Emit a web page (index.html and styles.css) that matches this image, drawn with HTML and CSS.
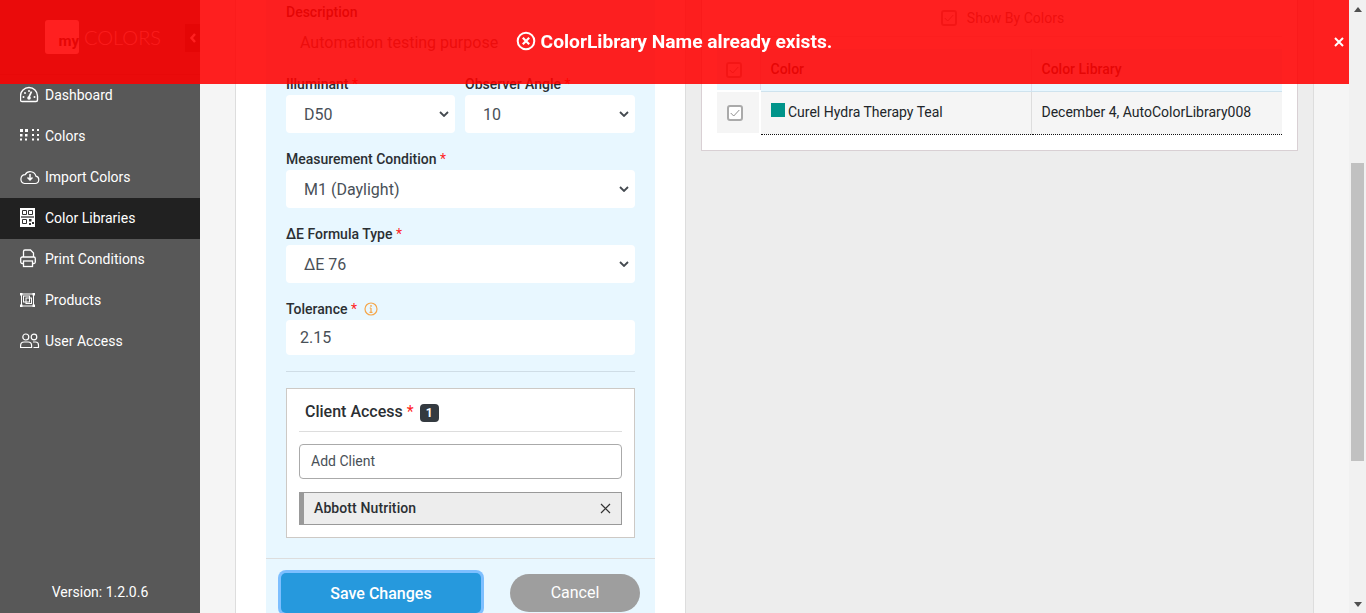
FILE: index.html
```html
<!DOCTYPE html>
<html lang="en">
<head>
<meta charset="utf-8">
<title>Color Libraries</title>
<link rel="stylesheet" href="styles.css">
</head>
<body>
<div class="app">
  <aside class="sidebar">
    <div class="brand">
      <span class="logo-box">my</span><span class="logo-word">COLORS</span>
      <span class="collapse"><svg width="8" height="12" viewBox="0 0 8 12"><path d="M6 2 2.500 6 6 10" fill="none" stroke="#fff" stroke-width="2.400"/></svg></span>
    </div>
    <nav class="nav">
      <a class="nav-item"><svg class="ico" viewBox="0 0 20 20"><path d="M2 17h13.500a1.500 1.500 0 0 0 1.500-1.500V11.500a8.500 8.500 0 0 0-17 0v4A1.500 1.500 0 0 0 2 17z" transform="translate(.5 -.5)" fill="none" stroke="#fff" stroke-width="1.400"/><path d="M9 12 11.500 6.500" stroke="#fff" stroke-width="1.800"/><circle cx="9" cy="6" r="1" fill="#fff"/><circle cx="5" cy="8" r="1" fill="#fff"/><circle cx="3.500" cy="12" r="1" fill="#fff"/><circle cx="14.500" cy="12" r="1" fill="#fff"/><circle cx="9" cy="13" r="1.800" fill="#fff"/></svg>Dashboard</a>
      <a class="nav-item"><svg class="ico" viewBox="0 0 20 20" fill="#fff"><rect x="0" y="3" width="3" height="3"/><rect x="5" y="3" width="3" height="3"/><rect x="0" y="8" width="2.500" height="2.500"/><rect x="5" y="8" width="2.500" height="2.500"/><rect x="0" y="12.500" width="2" height="2"/><rect x="5" y="12.500" width="2" height="2"/><rect x="12" y="3" width="2" height="2"/><rect x="17" y="3" width="2" height="2"/><rect x="12" y="8" width="2" height="2"/><rect x="17" y="8" width="2" height="2"/><rect x="12" y="12.500" width="2" height="2"/><rect x="17" y="12.500" width="2" height="2"/></svg>Colors</a>
      <a class="nav-item"><svg class="ico" viewBox="0 0 20 20"><path d="M4.500 16.500h10.500a3.700 3.700 0 0 0 .9-7.300A5.800 5.800 0 0 0 5.200 7.600a4.500 4.500 0 0 0-.7 8.900z" fill="none" stroke="#fff" stroke-width="1.200"/><path d="M10 7v6M7.500 10.500l2.500 2.500 2.500-2.500" fill="none" stroke="#fff" stroke-width="1.500"/></svg>Import Colors</a>
      <a class="nav-item active"><svg class="ico" viewBox="0 0 20 20"><rect x="0" y="0" width="15" height="19" fill="#fff"/><path d="M2.500 2.500h4v4h-4zM8.500 2.500h4v4h-4zM2.500 11.500h4v4h-4z" fill="none" stroke="#333" stroke-width="1"/><path d="M1 9h13" stroke="#222" stroke-width="1.200"/><path d="M9 11h2.500v2.500H9zM12 14h2v2h-2zM9 15h2v2H9z" fill="#333"/></svg>Color Libraries</a>
      <a class="nav-item"><svg class="ico" viewBox="0 0 20 20"><path d="M3.500 8V2.500A1.500 1.500 0 0 1 5 1h5.500l3 3v4" fill="none" stroke="#fff" stroke-width="1.300"/><rect x=".7" y="8" width="14.600" height="6.500" rx="1.500" fill="none" stroke="#fff" stroke-width="1.300"/><rect x="3.500" y="12" width="9" height="5.500" fill="#585858" stroke="#fff" stroke-width="1.300"/></svg>Print Conditions</a>
      <a class="nav-item"><svg class="ico" viewBox="0 0 20 20"><rect x="1.500" y="4" width="12" height="12" fill="none" stroke="#fff" stroke-width="1"/><g fill="#fff"><rect x="0" y="3" width="2.500" height="2.500"/><rect x="12.500" y="3" width="2.500" height="2.500"/><rect x="0" y="14.500" width="2.500" height="2.500"/><rect x="12.500" y="14.500" width="2.500" height="2.500"/></g><rect x="3.500" y="6" width="6" height="6" fill="none" stroke="#fff" stroke-width="1"/><rect x="6" y="8" width="5.500" height="5.500" fill="none" stroke="#fff" stroke-width="1"/></svg>Products</a>
      <a class="nav-item"><svg class="ico" viewBox="0 0 20 20"><circle cx="5.800" cy="6" r="3" fill="none" stroke="#fff" stroke-width="1.200"/><circle cx="14" cy="6" r="2.800" fill="none" stroke="#fff" stroke-width="1.200"/><path d="M.6 16.500v-2a3.500 3.500 0 0 1 3.500-3.500h4a3.500 3.500 0 0 1 3.500 3.500v2zM13 11h2.500a3 3 0 0 1 3 3v2.500h-5" fill="none" stroke="#fff" stroke-width="1.200"/></svg>User Access</a>
    </nav>
    <div class="version">Version: 1.2.0.6</div>
  </aside>
  <main class="main">
    <section class="left-card">
      <form class="form">
        <div class="field first">
          <label class="label">Description</label>
          <div class="textarea">Automation testing purpose</div>
        </div>
        <div class="two">
          <div class="field">
            <label class="label">Illuminant <b class="req">*</b></label>
            <div class="select">D50<svg class="chev" viewBox="0 0 10 6"><path d="M1 1l4 4 4-4" fill="none" stroke="#444a50" stroke-width="1.800"/></svg></div>
          </div>
          <div class="field">
            <label class="label">Observer Angle <b class="req">*</b></label>
            <div class="select">10<svg class="chev" viewBox="0 0 10 6"><path d="M1 1l4 4 4-4" fill="none" stroke="#444a50" stroke-width="1.800"/></svg></div>
          </div>
        </div>
        <div class="field">
          <label class="label">Measurement Condition <b class="req">*</b></label>
          <div class="select">M1 (Daylight)<svg class="chev" viewBox="0 0 10 6"><path d="M1 1l4 4 4-4" fill="none" stroke="#444a50" stroke-width="1.800"/></svg></div>
        </div>
        <div class="field">
          <label class="label">ΔE Formula Type <b class="req">*</b></label>
          <div class="select">ΔE 76<svg class="chev" viewBox="0 0 10 6"><path d="M1 1l4 4 4-4" fill="none" stroke="#444a50" stroke-width="1.800"/></svg></div>
        </div>
        <div class="field last">
          <label class="label">Tolerance <b class="req">*</b><svg class="info" viewBox="0 0 14 14"><circle cx="7" cy="7" r="6" fill="none" stroke="#f5a64a" stroke-width="1.200"/><path d="M7 6v4.200M5.500 10.300h3M5.700 6H7" fill="none" stroke="#f5a64a" stroke-width="1.200"/><circle cx="7" cy="3.900" r=".9" fill="#f5a64a"/></svg></label>
          <div class="input">2.15</div>
        </div>
        <hr class="rule">
        <div class="client">
          <h3 class="client-title">Client Access <b class="req">*</b> <span class="badge">1</span></h3>
          <div class="client-input">Add Client</div>
          <div class="chip"><span>Abbott Nutrition</span><svg width="11" height="11" viewBox="0 0 11 11"><path d="M1 1l9 9M10 1l-9 9" stroke="#333" stroke-width="1.200"/></svg></div>
        </div>
      </form>
      <div class="actions">
        <button class="btn-save" type="button">Save Changes</button>
        <button class="btn-cancel" type="button">Cancel</button>
      </div>
    </section>
    <section class="right-area">
      <div class="table-card">
        <div class="show-by"><span class="check"><svg viewBox="0 0 14 14"><path d="M2 7l3.500 3.500L12 3.500" fill="none" stroke="#888" stroke-width="1.100"/></svg></span>Show By Colors</div>
        <table class="table">
          <thead>
            <tr><th class="tick"><span class="check"><svg viewBox="0 0 14 14"><path d="M2 7l3.500 3.500L12 3.500" fill="none" stroke="#888" stroke-width="1.100"/></svg></span></th><th class="c1">Color</th><th>Color Library</th></tr>
          </thead>
          <tbody>
            <tr><td class="tick"><span class="check"><svg viewBox="0 0 14 14"><path d="M2 7l3.500 3.500L12 3.500" fill="none" stroke="#888" stroke-width="1.100"/></svg></span></td><td class="c1"><span class="swatch"></span>Curel Hydra Therapy Teal</td><td>December 4, AutoColorLibrary008</td></tr>
          </tbody>
        </table>
      </div>
    </section>
  </main>
  <div class="scrollbar">
    <span class="arrow up"></span>
    <span class="thumb"></span>
    <span class="arrow down"></span>
  </div>
</div>
<div class="toast">
  <div class="toast-msg"><svg width="20" height="20" viewBox="0 0 20 20"><circle cx="10" cy="10" r="8.300" fill="none" stroke="#fff" stroke-width="2"/><path d="M6.800 6.800l6.400 6.400M13.200 6.800l-6.400 6.400" stroke="#fff" stroke-width="2.200"/></svg>ColorLibrary Name already exists.</div>
  <svg class="toast-close" width="10" height="10" viewBox="0 0 10 10"><path d="M1 1l8 8M9 1l-8 8" stroke="#fff" stroke-width="2"/></svg>
</div>
</body>
</html>
```
FILE: styles.css
```css
* { box-sizing: border-box; }
html, body { margin: 0; height: 100%; overflow: hidden; }
body { font-family: Roboto, "Liberation Sans", sans-serif; font-size: 14px; color: #212529; background: #f5f5f5; }
.app { display: flex; height: 613px; }
.sidebar { width: 200px; flex: none; background: #585858; display: flex; flex-direction: column; color: #fff; }
.brand { height: 75px; display: flex; align-items: center; padding: 0 0 0 45px; position: relative; border-bottom: 1px solid #4a4a4a; }
.logo-box { width: 34px; height: 34px; background: #fff; border-radius: 3px; color: #333; font-weight: 700; font-size: 15px; display: flex; align-items: flex-end; justify-content: flex-end; padding-bottom: 4px; }
.logo-word { font-size: 20px; color: #ddd; margin-left: 5px; font-family: Lato, sans-serif; font-weight: 300; }
.collapse { position: absolute; right: 0; top: 24px; width: 15px; height: 28px; background: #333; display: flex; align-items: center; justify-content: center; }
.nav { display: flex; flex-direction: column; }
.nav-item { height: 41px; display: flex; align-items: center; padding-left: 20px; padding-bottom: 2px; color: #fff; font-size: 14px; }
.nav-item.active { background: #212121; }
.ico { width: 20px; height: 20px; margin-right: 5px; flex: none; }
.version { margin-top: auto; height: 29px; text-align: center; font-size: 14px; }
.main { flex: 1; display: flex; min-width: 0; }
.left-card { width: 451px; margin-left: 35px; flex: none; background: #fff; border-left: 1px solid #ddd; border-right: 1px solid #ddd; padding: 0 30px; display: flex; flex-direction: column; height: 613px; overflow: hidden; }
.form { background: #e8f7ff; padding: 0 20px; flex: none; height: 558px; }
.field { margin-bottom: 17px; }
.field.first { height: 75px; margin-bottom: 0; padding-top: 3px; }
.field.last { margin-bottom: 16px; }
.two { display: grid; grid-template-columns: 169px 170px; gap: 10px; }
.label { display: block; font-weight: 500; font-size: 14px; line-height: 18px; margin-bottom: 2px; color: #2b2f33; }
.req { color: #ff1f1f; font-weight: 400; }
.textarea { padding: 10px 14px 0; font-size: 16px; color: #666; }
.select { height: 38px; background: #fff; border-radius: 4px; display: flex; align-items: center; justify-content: space-between; padding: 0 6px 0 18px; font-size: 16px; color: #495057; }
.chev { width: 10px; height: 6px; }
.input { height: 35px; background: #fff; border-radius: 4px; display: flex; align-items: center; padding-left: 14px; font-size: 16px; color: #495057; }
.info { width: 14px; height: 14px; margin-left: 7px; vertical-align: -2px; }
.rule { border: 0; border-top: 1px solid #cfdde6; margin: 0 0 16px; }
.client { height: 150px; background: #fff; border: 1px solid #cdc9c5; padding: 0 12px; }
.client-title { margin: 0 0 12px; height: 43px; border-bottom: 1px solid #ddd; font-size: 16px; font-weight: 500; line-height: 46px; padding-left: 6px; color: #2b2f33; }
.badge { display: inline-block; background: #343a40; color: #fff; font-size: 12px; font-weight: 700; width: 19px; height: 18px; line-height: 18px; text-align: center; border-radius: 4px; margin-left: 2px; vertical-align: 0; }
.client-input { height: 35px; border: 1px solid #aaa; border-radius: 4px; padding: 0 0 1px 11px; display: flex; align-items: center; font-size: 14px; color: #495057; }
.chip { margin-top: 13px; height: 33px; background: #ededed; border: 1px solid #999; border-left: 5px solid #999; display: flex; align-items: center; justify-content: space-between; padding: 0 10px 1px 10px; font-weight: 500; font-size: 14px; letter-spacing: .1px; color: #2b2f33; }
.actions { flex: 1; background: #e8f7ff; border-top: 1px solid #ddd; display: flex; align-items: flex-start; padding: 15px 15px 0; justify-content: space-between; }
.btn-save { width: 200px; height: 40px; margin-top: -1px; border: 0; border-radius: 5px; background: #2699dd; color: #fff; font: 500 16px Roboto, sans-serif; box-shadow: 0 0 0 3px #7dbfff; }
.btn-cancel { width: 130px; height: 38px; border: 0; border-radius: 19px; background: #9e9e9e; color: #fff; font: 400 16px Roboto, sans-serif; padding: 0 0 2px; }
.right-area { width: 628px; flex: none; background: #ededed; border-right: 1px solid #ddd; }
.table-card { width: 597px; margin-left: 15px; height: 151px; background: #fff; border: 1px solid #d9d0d4; border-top: 0; padding: 0 15px; }
.show-by { height: 37px; padding-left: 6px; display: flex; align-items: center; justify-content: center; gap: 10px; color: #777; font-size: 14px; border-bottom: 1px solid #eee; }
.check { display: inline-block; width: 16px; height: 16px; border: 2px solid #aaa; border-radius: 3px; background: #fff; vertical-align: middle; }
.check svg { display: block; width: 12px; height: 12px; }
.table { border-collapse: collapse; width: 565px; margin-top: 12px; }
.table th { height: 42px; text-align: left; padding: 0 10px 1px; font-weight: 500; font-size: 14px; background: #e8f7ff; border-bottom: 1px solid #cfe3ee; border-left: 1px solid #dde; color: #333; }
.table td { height: 43px; padding: 0 10px 2px; font-size: 14px; background: #f5f5f5; border-left: 1px solid #ddd; border-bottom: 1px dotted #111; color: #212529; }
.table .tick { width: 43px; padding: 0 0 0 10px; border-left: 0; }
.table th.tick { background: #e8f7ff; padding-left: 9px; }
.table td.tick { border: 2px solid #fff; border-left: 0; }
.table .c1 { width: 271px; }
.swatch { display: inline-block; width: 14px; height: 14px; background: #00948a; margin-right: 3px; }
.scrollbar { width: 17px; flex: none; height: 613px; background: #f1f1f1; position: relative; }
.thumb { position: absolute; left: 2px; right: 2px; top: 163px; height: 298px; background: #c1c1c1; }
.arrow { position: absolute; left: 5px; width: 0; height: 0; border-left: 4px solid transparent; border-right: 4px solid transparent; }
.up { top: 7px; border-bottom: 5px solid #505050; }
.down { bottom: 6px; border-top: 5px solid #505050; }
.toast { position: fixed; left: 0; top: 0; width: 1349px; height: 84px; background: rgba(255, 0, 0, .875); display: flex; align-items: center; justify-content: center; padding-bottom: 2px; }
.toast-msg { display: flex; align-items: center; gap: 5px; margin-left: -1px; color: #fff; font-size: 19.2px; font-weight: 700; }
.toast-close { position: absolute; right: 5px; top: 37px; }
```
